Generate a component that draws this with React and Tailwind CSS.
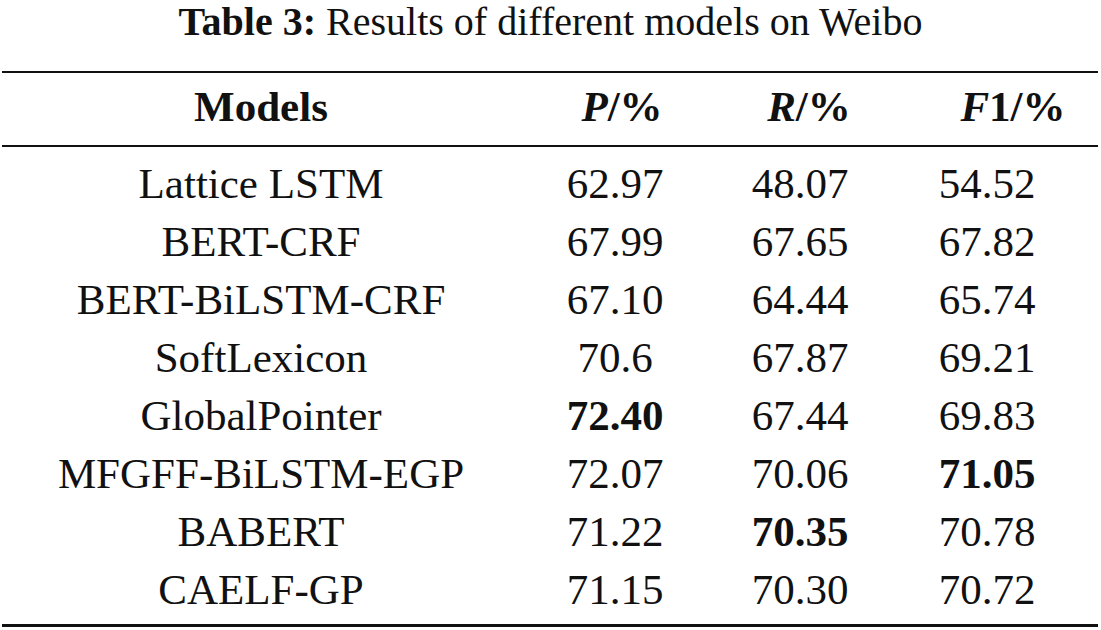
import React from 'react';

const rows = [
  { model: 'Lattice LSTM', p: '62.97', r: '48.07', f: '54.52' },
  { model: 'BERT-CRF', p: '67.99', r: '67.65', f: '67.82' },
  { model: 'BERT-BiLSTM-CRF', p: '67.10', r: '64.44', f: '65.74' },
  { model: 'SoftLexicon', p: '70.6', r: '67.87', f: '69.21' },
  { model: 'GlobalPointer', p: '72.40', r: '67.44', f: '69.83', bold: 'p' },
  { model: 'MFGFF-BiLSTM-EGP', p: '72.07', r: '70.06', f: '71.05', bold: 'f' },
  { model: 'BABERT', p: '71.22', r: '70.35', f: '70.78', bold: 'r' },
  { model: 'CAELF-GP', p: '71.15', r: '70.30', f: '70.72' },
];

const cols = 'grid grid-cols-[518px_190px_180px_194px]';

const Cell = ({ children, strong }) => (
  <div className={`text-center ${strong ? 'font-bold' : ''}`}>{children}</div>
);

const App = () => {
  return (
    <div className="w-[1101px] h-[630px] bg-white text-[#111] font-['Liberation_Serif',serif] overflow-hidden">
      <div className="text-center text-[40px] leading-[44px]">
        <span className="font-bold">Table 3:</span> Results of different models on Weibo
      </div>

      <div className="ml-[2px] w-[1096px] mt-[27px]">
        <div className="h-[2px] bg-[#111]" />

        <div className={`${cols} h-[72px] pb-[4px] text-[43px] leading-[68px] font-bold`}>
          <div className="text-center">Models</div>
          <div className="text-center pl-[14px]"><i>P</i>/%</div>
          <div className="text-center pl-[18px]"><i>R</i>/%</div>
          <div className="text-center pl-[52px]"><i>F</i>1/%</div>
        </div>

        <div className="h-[2px] bg-[#111]" />

        <div className="pt-[8px] pb-[5px] text-[43px] leading-[58px]">
          {rows.map((row) => (
            <div key={row.model} className={`${cols} h-[58px]`}>
              <Cell>{row.model}</Cell>
              <Cell strong={row.bold === 'p'}>{row.p}</Cell>
              <Cell strong={row.bold === 'r'}>{row.r}</Cell>
              <Cell strong={row.bold === 'f'}>{row.f}</Cell>
            </div>
          ))}
        </div>

        <div className="h-[3px] bg-[#111]" />
      </div>
    </div>
  );
};

export default App;
